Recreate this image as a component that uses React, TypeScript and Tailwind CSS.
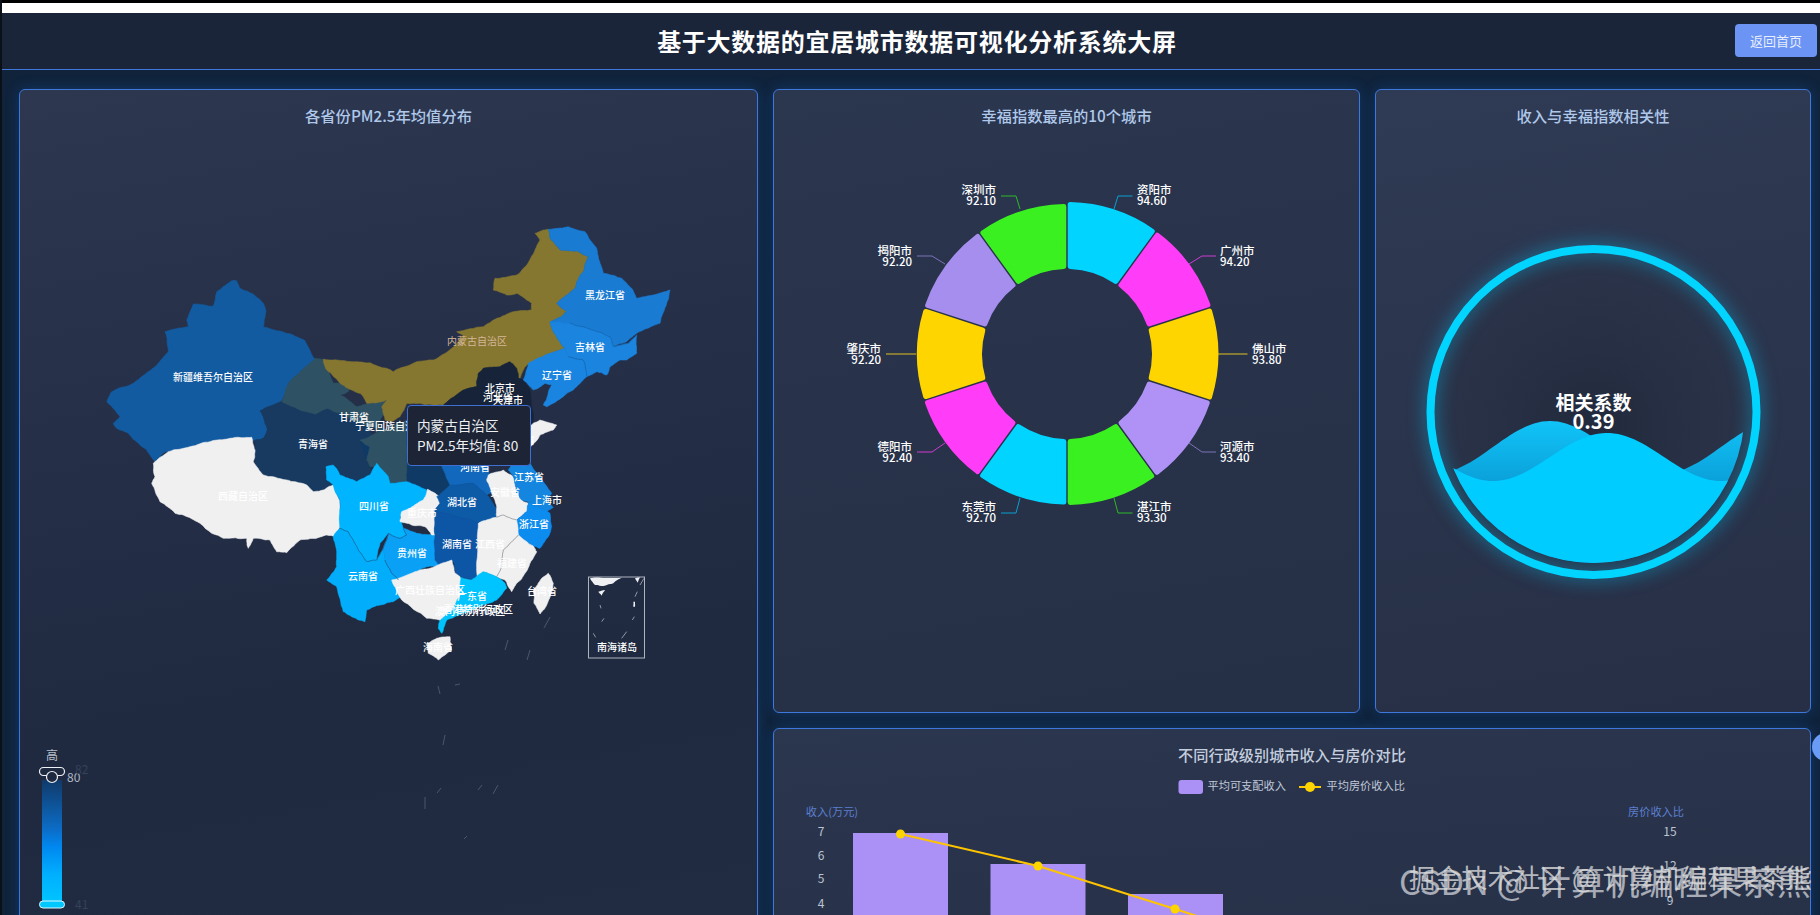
import React from "react";

type Prov = { fill: string; o: [number, number]; p: number[] };

const hash = (a: number, b: number) => {
  const s = Math.sin(a * 12.9898 + b * 78.233) * 43758.5453;
  return s - Math.floor(s);
};

const rough = (o: [number, number], p: number[], closed: boolean) => {
  let pts: [number, number][] = [];
  for (let i = 0; i < p.length; i += 2) pts.push([o[0] + p[i] / 3, o[1] + p[i + 1] / 3]);
  for (let level = 0; level < 3; level++) {
    const next: [number, number][] = [];
    const n = pts.length;
    for (let i = 0; i < (closed ? n : n - 1); i++) {
      const a = pts[i], b = pts[(i + 1) % n];
      next.push(a);
      const len = Math.hypot(a[0] - b[0], a[1] - b[1]);
      if (len < 2.2) continue;
      const sx = Math.round((a[0] + b[0]) * 5), sy = Math.round((a[1] + b[1]) * 5);
      const k = Math.min(len * 0.12, 1.5);
      next.push([(a[0] + b[0]) / 2 + (hash(sx, sy) - 0.5) * k, (a[1] + b[1]) / 2 + (hash(sy, sx) - 0.5) * k]);
    }
    if (!closed) next.push(pts[n - 1]);
    pts = next;
  }
  return pts.map((q, i) => (i === 0 ? "M" : "L") + q[0].toFixed(1) + " " + q[1].toFixed(1)).join("") + (closed ? "Z" : "");
};

const path = (o: [number, number], p: number[]) => rough(o, p, true);

const Z6: [number, number] = [100, 220];
const Z7: [number, number] = [320, 220];
const Z8: [number, number] = [140, 420];
const Z9: [number, number] = [340, 420];

const provinces: Prov[] = [
  { fill: "#135ba0", o: Z6, p: [395,182,410,182,420,205,445,215,460,222,490,250,498,275,490,320,540,333,580,345,615,362,645,420,600,455,565,490,545,540,525,560,485,572,495,610,502,630,490,655,465,660,400,680,300,690,195,695,165,725,140,690,115,670,85,640,50,625,40,610,60,590,20,545,35,515,100,490,165,440,205,395,195,335,265,320,260,300,280,252,340,258,350,215,385,190] },
  { fill: "#183a60", o: Z6, p: [480,572,545,545,600,570,645,583,680,565,720,580,800,620,820,650,830,700,800,720,830,790,790,830,760,850,730,870,700,890,690,860,660,840,640,870,610,890,560,870,500,850,480,780,465,720,465,660,490,655,502,630,495,610] },
  { fill: "#2e5264", o: Z6, p: [645,415,672,418,700,490,750,485,745,515,720,525,770,560,810,550,855,540,860,565,840,600,825,650,830,700,860,760,900,790,960,795,960,700,930,640,800,620,720,580,680,565,645,583,600,570,545,545,565,490,600,455] },
  { fill: "#857630", o: Z7, p: [645,40,685,28,690,55,720,90,770,93,805,110,790,155,770,185,765,205,740,225,710,250,725,265,740,275,725,290,690,305,695,325,715,360,735,385,690,400,640,425,620,435,600,475,590,470,580,430,565,425,540,445,490,445,475,460,470,500,430,510,370,555,350,555,280,550,260,550,240,590,215,605,195,600,185,560,200,540,170,548,140,550,130,530,120,520,95,510,60,490,20,450,10,418,50,420,100,425,150,428,200,445,220,455,290,425,340,420,395,385,430,345,410,335,490,320,530,295,580,275,635,270,635,250,590,220,560,225,520,210,525,175,590,165,620,135,645,90,660,60] },
  { fill: "#162339", o: Z7, p: [475,460,490,445,540,440,570,425,590,445,595,475,610,480,630,510,640,600,620,700,480,700,380,640,370,555,430,510,470,500] },
  { fill: "#103a66", o: Z9, p: [60,60,200,0,240,0,330,60,330,195,290,230,262,208,255,210,200,190,155,190,125,165,115,135,90,140,80,120] },
  { fill: "#1168bc", o: Z9, p: [290,100,450,100,445,180,460,215,440,225,400,190,330,195] },
  { fill: "#f0f0f1", o: Z7, p: [640,610,660,600,710,615,700,630,660,645,632,680,600,700,600,640] },
  { fill: "#2e5264", o: Z9, p: [80,120,90,80,60,60,200,0,200,140,200,185,155,190,125,165,115,135,90,140] },
  { fill: "#f0f0f1", o: Z8, p: [40,130,85,95,150,80,210,65,270,55,335,52,345,90,340,125,370,165,440,180,500,195,520,215,550,210,580,195,598,240,600,320,590,350,560,345,530,355,480,360,440,398,410,395,390,360,340,355,325,385,320,355,250,355,215,340,180,310,130,285,105,280,60,245,35,190,45,170] },
  { fill: "#02aefc", o: Z8, p: [600,325,625,335,655,390,680,425,710,420,730,385,735,420,755,460,775,480,795,505,785,530,760,545,720,555,680,570,675,605,635,590,610,575,590,500,560,480,590,440,590,400,580,350] },
  { fill: "#00b4ff", o: Z8, p: [558,140,580,135,600,165,650,185,690,165,710,130,745,170,750,190,800,185,860,210,855,235,825,265,780,290,790,325,800,345,780,355,745,340,720,370,710,420,680,425,655,390,625,335,600,325,600,240,580,195,560,180] },
  { fill: "#0aa0f5", o: Z8, p: [745,340,780,355,800,345,790,325,830,340,900,345,905,435,860,440,810,470,770,480,755,460,735,420,730,385] },
  { fill: "#f0f0f1", o: Z9, p: [262,208,305,235,300,250,285,270,285,345,275,345,255,320,215,315,180,305,185,275,210,265,250,240] },
  { fill: "#0d5aa6", o: Z9, p: [290,230,330,195,400,190,440,225,470,265,470,293,420,310,350,290,285,270,300,250] },
  { fill: "#0d55a5", o: Z9, p: [285,270,350,290,420,310,412,350,412,470,395,480,350,465,340,425,300,440,285,420,285,345] },
  { fill: "#f0f0f1", o: Z9, p: [445,165,490,150,520,170,530,220,550,245,565,250,560,275,530,300,490,285,470,290,470,260,455,220,440,180] },
  { fill: "#1486e0", o: Z9, p: [520,130,570,130,600,170,635,220,620,240,565,245,545,240,530,220,520,170,505,150] },
  { fill: "#1486e0", o: Z9, p: [620,240,640,262,620,275,565,250,565,245] },
  { fill: "#0d8cf0", o: Z9, p: [565,250,630,280,635,320,625,350,600,385,580,378,530,345,530,300,560,275] },
  { fill: "#f0f0f1", o: Z9, p: [415,310,470,292,490,285,530,300,535,345,490,390,485,440,470,470,430,455,412,470,412,350] },
  { fill: "#f0f0f1", o: Z9, p: [535,345,580,378,590,395,570,430,555,460,530,490,515,515,495,480,470,470,485,440,490,390] },
  { fill: "#00c4ff", o: Z9, p: [358,470,395,480,430,455,470,470,495,490,500,505,470,540,430,555,370,580,320,600,305,640,295,625,300,600,335,570,360,525] },
  { fill: "#f0f0f1", o: Z9, p: [155,480,225,455,270,445,335,420,345,460,360,470,360,525,335,570,300,600,260,595,185,540] },
  { fill: "#f0f0f1", o: Z9, p: [290,655,330,650,335,690,295,720,265,700,262,670] },
  { fill: "#f0f0f1", o: Z9, p: [625,460,640,490,620,555,600,582,582,550,580,510,605,475] },
  { fill: "#1a7bd2", o: Z7, p: [685,28,745,20,795,35,830,85,840,130,850,160,905,175,935,205,950,235,1000,225,1050,210,1040,250,1020,310,950,340,920,365,880,380,870,350,790,320,750,310,690,305,725,290,740,275,725,265,710,250,740,225,765,205,770,185,790,155,805,110,770,93,720,90,690,55] },
  { fill: "#1a84df", o: Z7, p: [690,305,750,310,790,320,870,350,880,380,925,370,950,345,950,400,920,420,900,420,870,440,860,465,830,455,800,470,790,420,745,410,735,385,715,360,695,325] },
  { fill: "#1a85e0", o: Z7, p: [625,430,690,400,735,385,745,410,790,420,800,470,760,510,730,530,680,560,670,555,695,495,675,490,640,510,610,480] },
];

const seams: { o: [number, number]; p: number[]; c: string }[] = [
  { o: Z8, c: "#1d5f8c", p: [600,325,625,335,655,390,680,425,710,420,730,385,745,340,780,355,800,345,790,325] },
  { o: Z8, c: "#1d5f8c", p: [735,420,755,460,775,480] },
  { o: Z9, c: "#8a8d92", p: [535,345,490,390,485,440,470,470] },
  { o: Z9, c: "#8a8d92", p: [470,292,490,285,530,300] },
  { o: Z7, c: "#1564ae", p: [750,310,790,320,870,350,880,380,925,370,950,345] },
  { o: Z7, c: "#1564ae", p: [745,410,790,420,800,470] },
];

const inset: number[][] = [
  [750,475,850,472,820,490,790,498,765,495],
  [885,475,900,472,893,488],
  [775,515,795,510,785,527],
  [880,545,885,545,885,560,880,560],
];
const insetLines: number[][] = [
  [785,605,792,595],[877,600,883,590],[760,640,767,652],[845,655,860,635],[780,555,783,565],[885,530,892,515],[900,495,912,475],
];
const specks: number[][] = [
  [438,686,440,694],[443,745,445,735],[478,790,482,785],[493,794,498,785],[437,793,441,788],[425,809,425,797],[464,839,467,836],[544,628,550,617],[527,660,530,650],[505,650,508,640],[455,685,460,684],
];

const labels: [string, number, number][] = [
  ["黑龙江省",605,294],["吉林省",590,346],["辽宁省",557,374],["新疆维吾尔自治区",213,376],["青海省",313,443],
  ["北京市",500,387],["河北省",498,396],["天津市",508,399],["甘肃省",354,416],["宁夏回族自治区",390,425],
  ["四川省",374,505],["云南省",363,575],["贵州省",412,552],["重庆市",422,512],["湖北省",462,501],["湖南省",457,543],
  ["河南省",475,466],["江苏省",529,476],["上海市",547,499],["浙江省",534,523],["广东省",472,595],
  ["广西壮族自治区",430,589],["香港特别行政区",478,608],["澳门特别行政区",470,610],["台湾省",542,590],["海南省",438,646],["南海诸岛",617,646],
  ["西藏自治区",243,495],["江西省",490,543],["福建省",512,562],["安徽省",505,491],["山东省",520,439],
];

type Seg = { c: string; v: number };
const segs: Seg[] = [
  { c: "#00d4ff", v: 94.6 }, { c: "#ff3cf7", v: 94.2 }, { c: "#ffd500", v: 93.8 }, { c: "#b092f6", v: 93.4 }, { c: "#3af020", v: 93.3 },
  { c: "#00d4ff", v: 92.7 }, { c: "#ff3cf7", v: 92.4 }, { c: "#ffd500", v: 92.2 }, { c: "#a68eee", v: 92.2 }, { c: "#3af020", v: 92.1 },
];

const CX = 1067, CY = 354, RI = 85, C = 2.5;
const pt = (r: number, a: number) => `${(CX + r * Math.sin(a)).toFixed(2)} ${(CY - r * Math.cos(a)).toFixed(2)}`;
const segPath = (i: number, v: number) => {
  const ro = 150 + (v - 92.1) * 0.8 - C;
  const ri = RI + C;
  const a0 = (i * Math.PI) / 5, a1 = ((i + 1) * Math.PI) / 5;
  const g = 0.7 + C;
  return `M${pt(ro, a0 + g / ro)}A${ro} ${ro} 0 0 1 ${pt(ro, a1 - g / ro)}L${pt(ri, a1 - g / ri)}A${ri} ${ri} 0 0 0 ${pt(ri, a0 + g / ri)}Z`;
};

type DL = { n: string; v: string; x: number; y: number; end?: boolean; line: string; c: string };
const donutLabels: DL[] = [
  { n: "资阳市", v: "94.60", x: 1137, y: 189, line: "1114,209 1118,196 1132.5,196", c: "#0a9fd0" },
  { n: "广州市", v: "94.20", x: 1220, y: 250, line: "1189,264 1202,256 1216,256", c: "#d03ad0" },
  { n: "佛山市", v: "93.80", x: 1252, y: 348, line: "1218,354 1247.5,354", c: "#e0c020" },
  { n: "河源市", v: "93.40", x: 1220, y: 446, line: "1189,443 1202,452 1216,452", c: "#7d72b8" },
  { n: "湛江市", v: "93.30", x: 1137, y: 506, line: "1114,498 1118,513 1132.5,513", c: "#2fb828" },
  { n: "东莞市", v: "92.70", x: 996, y: 506, end: true, line: "1020,498 1016,513 1001,513", c: "#0a9fd0" },
  { n: "德阳市", v: "92.40", x: 912, y: 446, end: true, line: "945,443 932,452 917,452", c: "#d03ad0" },
  { n: "肇庆市", v: "92.20", x: 881, y: 348, end: true, line: "916,354 886,354", c: "#e0c020" },
  { n: "揭阳市", v: "92.20", x: 912, y: 250, end: true, line: "945,264 932,256 917,256", c: "#7d72b8" },
  { n: "深圳市", v: "92.10", x: 996, y: 189, end: true, line: "1020,209 1016,196 1001,196", c: "#2fb828" },
];

const wave = (mean: number, amp: number, trough: number) => {
  let d = "M1430 600";
  for (let x = 1430; x <= 1760; x += 4) {
    const y = mean + amp * Math.cos((2 * Math.PI * (x - trough)) / 228);
    d += `L${x} ${y.toFixed(1)}`;
  }
  return d + "L1760 600Z";
};

const panel =
  "relative border border-[#3f78dc] rounded-[6px] shadow-[0_0_14px_rgba(24,110,220,0.28)] overflow-hidden";
const title = "text-center text-[15.3px] leading-6 font-medium text-[#afc8ea]";

export default function App() {
  return (
    <div className="relative w-[1820px] h-[915px] overflow-hidden flex flex-col border-l-2 border-[#0a1018] bg-[#10233b] font-['Noto_Sans_CJK_SC','Noto_Sans',sans-serif]">
      <div className="h-[3px] shrink-0 bg-black" />
      <div className="h-[10px] shrink-0 bg-white" />
      <header className="relative h-[57px] shrink-0 flex items-center justify-center pl-[12px] border-b border-[#3f78dc] bg-[#1b2539]">
        <h1 className="text-[24px] tracking-[0.75px] font-bold text-white">基于大数据的宜居城市数据可视化分析系统大屏</h1>
        <button className="absolute right-[3px] top-[11px] w-[82px] h-[33px] rounded-[4px] bg-[#6b94f5] text-[13px] text-[#e8eefc]">返回首页</button>
      </header>

      <main className="flex gap-[15px] pl-[17px] pt-[19px]">
        <section className={`${panel} w-[739px] h-[900px] shrink-0 bg-[linear-gradient(170deg,#2d3750_0%,#252f48_35%,#1f2a40_65%,#212c43_100%)]`}>
          <h2 className={`${title} pt-[13px] pb-[13px]`}>各省份PM2.5年均值分布</h2>
          <svg viewBox="20 140 737 850" className="block w-[737px] h-[850px]">
            {provinces.map((v, i) => (
              <path key={i} d={path(v.o, v.p)} fill={v.fill} stroke={v.fill} strokeWidth={0.6} strokeLinejoin="round" />
            ))}
            {seams.map((s, i) => (
              <path key={i} d={rough(s.o, s.p, false)} fill="none" stroke={s.c} strokeWidth={0.7} />
            ))}
            {specks.map((s, i) => (
              <line key={i} x1={s[0]} y1={s[1]} x2={s[2]} y2={s[3]} stroke="#aab4c4" strokeOpacity={0.4} strokeWidth={0.8} />
            ))}
            <rect x={588.5} y={577} width={56} height={81} fill="none" stroke="#aeb4c0" strokeWidth={1} />
            {inset.map((p, i) => (
              <path key={i} d={path(Z9, p)} fill="#eef0f2" />
            ))}
            {insetLines.map((l, i) => (
              <line key={i} x1={340 + l[0] / 3} y1={420 + l[1] / 3} x2={340 + l[2] / 3} y2={420 + l[3] / 3} stroke="#cfd4dc" strokeOpacity={0.8} strokeWidth={0.8} />
            ))}
            {labels.map(([t, x, y]) => (
              <text key={t} x={x} y={y} textAnchor="middle" dominantBaseline="central" className="text-[10px] fill-white font-medium">{t}</text>
            ))}
            <text x={477} y={340} textAnchor="middle" dominantBaseline="central" className="text-[10px] fill-[#d6b79a]">内蒙古自治区</text>

            <text x={52} y={754} textAnchor="middle" dominantBaseline="central" className="text-[12px] fill-[#b8c0cc]">高</text>
            <defs>
              <linearGradient id="vm" x1="0" y1="0" x2="0" y2="1">
                <stop offset="0" stopColor="#103a6a" />
                <stop offset="0.4" stopColor="#0c6cc6" />
                <stop offset="0.55" stopColor="#0088f0" />
                <stop offset="0.78" stopColor="#00b0ff" />
                <stop offset="1" stopColor="#00c4ff" />
              </linearGradient>
            </defs>
            <rect x={42} y={780} width={20} height={122} fill="url(#vm)" />
            <rect x={39.5} y={767.5} width={25} height={8} rx={4} fill="#1f2a40" stroke="#eef2f6" strokeWidth={1.2} />
            <circle cx={52} cy={777} r={5.5} fill="#1f2a40" stroke="#eef2f6" strokeWidth={1.2} />
            <rect x={39.5} y={901} width={25} height={7} rx={3.5} fill="#00c8ff" stroke="#dff6ff" strokeWidth={1} />
            <text x={67} y={776} dominantBaseline="central" className="text-[12px] fill-[#b0b8c8]">80</text>
            <text x={75} y={768} dominantBaseline="central" className="text-[12px] fill-[#364159]">82</text>
            <text x={75} y={903} dominantBaseline="central" className="text-[12px] fill-[#364159]">41</text>
            <text x={52} y={920} textAnchor="middle" dominantBaseline="central" className="text-[12px] fill-[#b8c0cc]">低</text>
          </svg>
          <div className="absolute left-[387px] top-[315px] w-[124px] h-[61px] px-[9px] pt-[9px] rounded-[4px] border border-[#3f6fd0] bg-[#1c2436] text-[13.6px] leading-[20px] text-[#eef0f4] whitespace-nowrap">
            <div>内蒙古自治区</div>
            <div>PM2.5年均值: 80</div>
          </div>
        </section>

        <div className="flex flex-col gap-[15px] w-[1038px] shrink-0">
          <div className="flex gap-[15px] h-[624px] shrink-0">
            <section className={`${panel} w-[587px] shrink-0 bg-[linear-gradient(170deg,#2b364f,#252f45)]`}>
              <h2 className={`${title} pt-[13px] pb-[13px]`}>幸福指数最高的10个城市</h2>
              <svg viewBox="774 140 585 572" className="block w-[585px] h-[572px]">
                {segs.map((s, i) => (
                  <path key={i} d={segPath(i, s.v)} fill={s.c} stroke={s.c} strokeWidth={C * 2} strokeLinejoin="round" />
                ))}
                {donutLabels.map((l) => (
                  <g key={l.n}>
                    <polyline points={l.line} fill="none" stroke={l.c} strokeWidth={1} />
                    <text x={l.x} y={l.y} textAnchor={l.end ? "end" : "start"} dominantBaseline="central" className="text-[11.5px] fill-white font-medium">{l.n}</text>
                    <text x={l.x} y={l.y + 10.8} textAnchor={l.end ? "end" : "start"} dominantBaseline="central" className="text-[11.5px] fill-white font-medium">{l.v}</text>
                  </g>
                ))}
              </svg>
            </section>

            <section className={`${panel} flex-1 bg-[linear-gradient(170deg,#2f3a54,#262f45)]`}>
              <h2 className={`${title} pt-[13px] pb-[13px]`}>收入与幸福指数相关性</h2>
              <svg viewBox="1376 140 435 572" className="block w-[435px] h-[572px]">
                <defs>
                  <clipPath id="water"><circle cx={1593.5} cy={412} r={151} /></clipPath>
                  <radialGradient id="inner" cx="0.5" cy="0.55" r="0.5">
                    <stop offset="0" stopColor="#222b3d" />
                    <stop offset="1" stopColor="#2a3349" />
                  </radialGradient>
                  <linearGradient id="back" x1="0" y1="0" x2="0" y2="1">
                    <stop offset="0" stopColor="#10c4f8" />
                    <stop offset="0.4" stopColor="#0a9ad4" />
                    <stop offset="1" stopColor="#0a9ad4" />
                  </linearGradient>
                </defs>
                <circle cx={1593.5} cy={412} r={160} fill="url(#inner)" />
                <circle cx={1593.5} cy={412} r={163} fill="none" stroke="#00d4ff" strokeWidth={8} className="drop-shadow-[0_0_9px_rgba(0,200,255,0.6)]" />
                <g clipPath="url(#water)">
                  <path d={wave(447, 26, 1664)} fill="url(#back)" />
                  <path d={wave(457, 24, 1493)} fill="#00ccff" />
                </g>
                <text x={1593.5} y={401.5} textAnchor="middle" dominantBaseline="central" className="text-[19px] font-bold fill-white">相关系数</text>
                <text x={1593.5} y={420} textAnchor="middle" dominantBaseline="central" className="text-[20px] font-bold fill-white">0.39</text>
              </svg>
            </section>
          </div>

          <section className={`${panel} h-[300px] shrink-0 bg-[linear-gradient(175deg,#2b364f,#252f45)]`}>
            <h2 className="text-center text-[15.2px] leading-6 font-medium text-[#c4cede] pt-[13px] pb-[9px]">不同行政级别城市收入与房价对比</h2>
            <svg viewBox="774 775 1036 240" className="block w-[1036px] h-[240px]">
              <rect x={1178.5} y={780} width={24.5} height={14} rx={3} fill="#ab90f5" />
              <text x={1207.5} y={785} dominantBaseline="central" className="text-[11.2px] fill-[#c0c8d8]">平均可支配收入</text>
              <line x1={1299} x2={1321} y1={787} y2={787} stroke="#ffcc00" strokeWidth={2} />
              <circle cx={1310} cy={787} r={5} fill="#ffd500" />
              <text x={1326.5} y={785} dominantBaseline="central" className="text-[11.2px] fill-[#c0c8d8]">平均房价收入比</text>

              <text x={832} y={811} textAnchor="middle" dominantBaseline="central" className="text-[11.2px] fill-[#5d7fd0]">收入(万元)</text>
              <text x={1656} y={811} textAnchor="middle" dominantBaseline="central" className="text-[11.2px] fill-[#5d7fd0]">房价收入比</text>
              {[["7",830.5],["6",854.5],["5",877.5],["4",902]].map(([t,y]) => (
                <text key={t as string} x={821} y={y as number} textAnchor="middle" dominantBaseline="central" className="text-[12px] fill-[#bcc4d0]">{t}</text>
              ))}
              {[["15",830.5],["12",864],["9",899]].map(([t,y]) => (
                <text key={t as string} x={1670} y={y as number} textAnchor="middle" dominantBaseline="central" className="text-[12px] fill-[#bcc4d0]">{t}</text>
              ))}
              <rect x={853} y={833} width={95} height={120} fill="#ab90f5" />
              <rect x={990.5} y={864} width={95} height={90} fill="#ab90f5" />
              <rect x={1128} y={894} width={95} height={60} fill="#ab90f5" />
              <polyline points="900.5,834 1038,866 1175,909 1225,925" fill="none" stroke="#ffc400" strokeWidth={2} />
              {[[900.5,834],[1038,866],[1175,909]].map(([x,y]) => (
                <circle key={x} cx={x} cy={y} r={4.5} fill="#ffd500" />
              ))}
            </svg>
          </section>
        </div>
      </main>

      <div className="absolute right-[-20px] top-[733px] w-[28px] h-[28px] rounded-full bg-[#6a9cf5]" />

      <div className="absolute left-[1397px] top-[858px] text-[34.3px] leading-[44px] whitespace-nowrap text-white/60 pointer-events-none">CSDN @ 计算机编程果茶熊</div>
      <div className="absolute left-[1407px] top-[859px] text-[26.2px] leading-[36px] whitespace-nowrap text-[#dcdcdc]/80 pointer-events-none">掘金技术社区 @ 计算机编程果茶熊</div>
    </div>
  );
}
